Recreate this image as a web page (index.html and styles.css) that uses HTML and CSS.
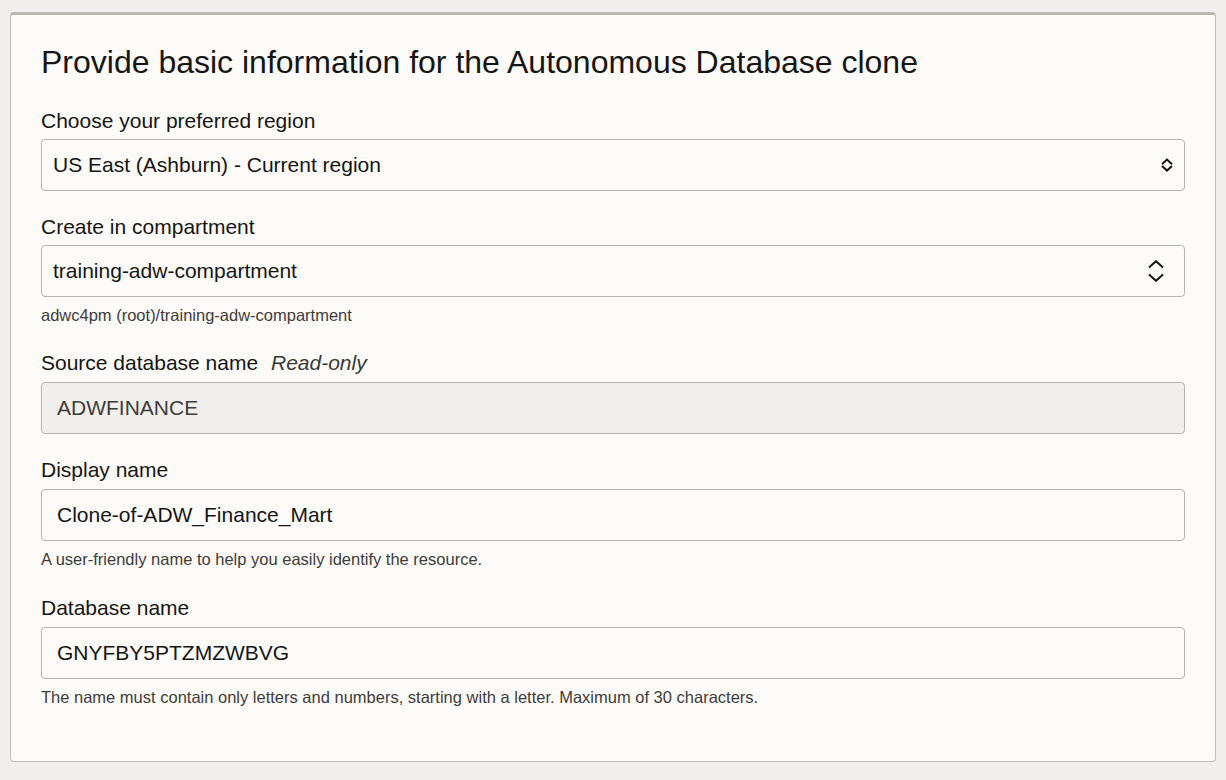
FILE: index.html
```html
<!DOCTYPE html>
<html lang="en">
<head>
<meta charset="utf-8">
<title>Clone Autonomous Database</title>
<link rel="stylesheet" href="styles.css">
</head>
<body>
<div class="card">
  <h1 class="title">Provide basic information for the Autonomous Database clone</h1>

  <div class="field">
    <label class="label">Choose your preferred region</label>
    <div class="box select">
      <span class="value">US East (Ashburn) - Current region</span>
      <svg class="chev chev-sm" width="12" height="14" viewBox="0 0 12 14" aria-hidden="true">
        <path d="M1 6.2 L6 1.6 L11 6.2" fill="none" stroke="#161513" stroke-width="2"/>
        <path d="M1 8 L6 12.6 L11 8" fill="none" stroke="#161513" stroke-width="2"/>
      </svg>
    </div>
  </div>

  <div class="field">
    <label class="label">Create in compartment</label>
    <div class="box select">
      <span class="value">training-adw-compartment</span>
      <svg class="chev chev-lg" width="16" height="22" viewBox="0 0 16 22" aria-hidden="true">
        <path d="M1 7.5 L8 1.2 L15 7.5" fill="none" stroke="#161513" stroke-width="2"/>
        <path d="M1 14.5 L8 20.8 L15 14.5" fill="none" stroke="#161513" stroke-width="2"/>
      </svg>
    </div>
    <div class="help">adwc4pm (root)/training-adw-compartment</div>
  </div>

  <div class="field field-input">
    <label class="label">Source database name <em class="ro">Read-only</em></label>
    <div class="box input readonly">
      <span class="value">ADWFINANCE</span>
    </div>
  </div>

  <div class="field field-input">
    <label class="label">Display name</label>
    <div class="box input">
      <span class="value">Clone-of-ADW_Finance_Mart</span>
    </div>
    <div class="help help-tall">A user-friendly name to help you easily identify the resource.</div>
  </div>

  <div class="field field-input">
    <label class="label">Database name</label>
    <div class="box input">
      <span class="value">GNYFBY5PTZMZWBVG</span>
    </div>
    <div class="help">The name must contain only letters and numbers, starting with a letter. Maximum of 30 characters.</div>
  </div>
</div>
</body>
</html>
```

FILE: styles.css
```css
* { box-sizing: border-box; }
html, body { margin: 0; padding: 0; }
body {
  background: #f1efed;
  font-family: "Liberation Sans", Arial, sans-serif;
  color: #161513;
  width: 1226px;
  height: 780px;
  overflow: hidden;
}
.card {
  margin: 12px 10px 0 10px;
  width: 1206px;
  height: 750px;
  background: #fcfbfa;
  border: 1px solid #c2beb9;
  border-top: 3px solid #b9b5b0;
  border-radius: 4px;
  padding: 27px 30px 0 30px;
}
.title {
  margin: 0 0 27px 0;
  font-size: 32px;
  font-weight: normal;
  line-height: 40px;
  color: #161513;
}
.field {
  margin-bottom: 24px;
}
.label {
  display: block;
  font-size: 21px;
  line-height: 24px;
  margin-bottom: 6px;
  color: #161513;
}
.field-input .label {
  margin-bottom: 7px;
}
.ro {
  font-style: italic;
  margin-left: 7px;
  color: #3a3835;
}
.box {
  height: 52px;
  border: 1px solid #b8b4af;
  border-radius: 4px;
  background: #fcfbfa;
  display: flex;
  align-items: center;
  font-size: 21px;
  color: #161513;
}
.select {
  padding: 0 11px 0 11px;
  justify-content: space-between;
}
.input {
  padding: 0 15px;
}
.readonly {
  background: #f1efed;
  color: #3f3c39;
}
.chev-sm { margin-right: 0; }
.chev-lg { margin-right: 9px; }
.help {
  margin-top: 9px;
  font-size: 16.5px;
  line-height: 18px;
  color: #3f3c39;
  padding-bottom: 3px;
}
.help-tall {
  padding-bottom: 4px;
}
```
